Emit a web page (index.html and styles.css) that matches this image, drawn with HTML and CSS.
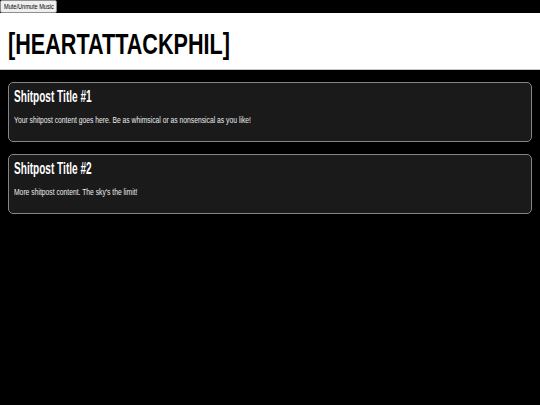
FILE: index.html
```html
<!DOCTYPE html>
<html lang="en">
<head>
    <meta charset="utf-8"/>
    <title>[HEARTATTACKPHIL]</title>
    <link rel="stylesheet" href="styles.css">
</head>
<body>
    <button type="button" class="music-toggle"><span>Mute/Unmute Music</span></button>

    <header class="site-header">
        <h1>[HEARTATTACKPHIL]</h1>
    </header>

    <main class="posts">
        <article class="post">
            <h2>Shitpost Title #1</h2>
            <p>Your shitpost content goes here. Be as whimsical or as nonsensical as you like!</p>
        </article>
        <article class="post">
            <h2>Shitpost Title #2</h2>
            <p>More shitpost content. The sky's the limit!</p>
        </article>
    </main>
</body>
</html>
```

FILE: styles.css
```css
/* page base, narrow sans everywhere */
body {
    margin: 0;
    background-color: #000;
    color: #fff;
    font-family: "Liberation Sans", Arial, sans-serif;
}

.music-toggle span,
.site-header h1,
.post h2,
.post p {
    transform-origin: left center;
    white-space: nowrap;
}

.music-toggle {
    display: block;
    box-sizing: border-box;
    width: 57px;
    height: 13px;
    margin: 0;
    padding: 0 0 0 3px;
    color: #000;
    background-color: #efefef;
    border: 1px solid #8f8f8f;
    border-radius: 2px;
    font-family: inherit;
    font-size: 8px;
    line-height: 11px;
    text-align: left;
    overflow: hidden;
}

.music-toggle span {
    display: block;
    transform: scaleX(.7);
}

.site-header {
    background-color: #fff;
    color: #000;
    padding: 13px 8px 8px;
    border-bottom: 1px solid #c8c8c8;
}

.site-header h1 {
    margin: 0;
    font-size: 30px;
    line-height: 35px;
    transform: scaleX(.72);
}

.posts {
    display: flex;
    flex-direction: column;
    gap: 12px;
    padding: 12px 8px;
}

.post {
    height: 60px;
    box-sizing: border-box;
    background-color: #1a1a1a;
    border: 1px solid #858585;
    border-radius: 5px;
    padding: 5px 5px 0;
}

.post h2 {
    margin: 0;
    font-size: 16px;
    line-height: 17px;
    transform: scaleX(.63);
}

.post p {
    margin: 10px 0 0;
    font-size: 9px;
    line-height: 10px;
    color: #ececec;
    transform: scaleX(.75);
}
```
